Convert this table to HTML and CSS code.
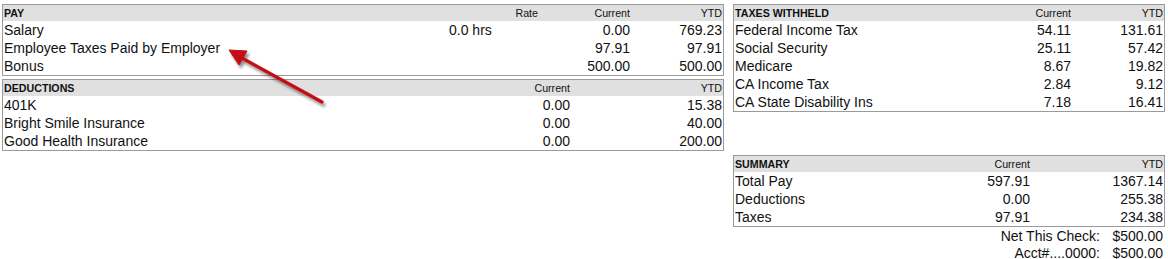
FILE: index.html
```html
<!DOCTYPE html>
<html>
<head>
<meta charset="utf-8">
<link rel="stylesheet" href="styles.css">
</head>
<body>
<div class="page">
  <div class="col left">
    <div class="box pay">
      <div class="row head">
        <span class="title">PAY</span><span></span><span class="r">Rate</span><span class="r">Current</span><span class="r">YTD</span>
      </div>
      <div class="row"><span>Salary</span><span>0.0 hrs</span><span></span><span class="r">0.00</span><span class="r">769.23</span></div>
      <div class="row"><span>Employee Taxes Paid by Employer</span><span></span><span></span><span class="r">97.91</span><span class="r">97.91</span></div>
      <div class="row"><span>Bonus</span><span></span><span></span><span class="r">500.00</span><span class="r">500.00</span></div>
    </div>
    <div class="box ded">
      <div class="row head"><span class="title">DEDUCTIONS</span><span class="r">Current</span><span class="r">YTD</span></div>
      <div class="row"><span>401K</span><span class="r">0.00</span><span class="r">15.38</span></div>
      <div class="row"><span>Bright Smile Insurance</span><span class="r">0.00</span><span class="r">40.00</span></div>
      <div class="row"><span>Good Health Insurance</span><span class="r">0.00</span><span class="r">200.00</span></div>
    </div>
  </div>
  <div class="col right">
    <div class="box tax">
      <div class="row head"><span class="title">TAXES WITHHELD</span><span class="r">Current</span><span class="r">YTD</span></div>
      <div class="row"><span>Federal Income Tax</span><span class="r">54.11</span><span class="r">131.61</span></div>
      <div class="row"><span>Social Security</span><span class="r">25.11</span><span class="r">57.42</span></div>
      <div class="row"><span>Medicare</span><span class="r">8.67</span><span class="r">19.82</span></div>
      <div class="row"><span>CA Income Tax</span><span class="r">2.84</span><span class="r">9.12</span></div>
      <div class="row"><span>CA State Disability Ins</span><span class="r">7.18</span><span class="r">16.41</span></div>
    </div>
    <div class="box sum">
      <div class="row head"><span class="title">SUMMARY</span><span class="r">Current</span><span class="r">YTD</span></div>
      <div class="row"><span>Total Pay</span><span class="r">597.91</span><span class="r">1367.14</span></div>
      <div class="row"><span>Deductions</span><span class="r">0.00</span><span class="r">255.38</span></div>
      <div class="row"><span>Taxes</span><span class="r">97.91</span><span class="r">234.38</span></div>
    </div>
    <div class="net">
      <div class="netrow"><span class="r">Net This Check:</span><span class="r">$500.00</span></div>
      <div class="netrow"><span class="r">Acct#....0000:</span><span class="r">$500.00</span></div>
    </div>
  </div>
</div>
<svg class="arrow" width="1168" height="259" viewBox="0 0 1168 259">
  <defs>
    <filter id="sh" x="-20%" y="-20%" width="150%" height="150%">
      <feGaussianBlur in="SourceAlpha" stdDeviation="1.6"/>
      <feOffset dx="2" dy="3" result="b"/>
      <feComponentTransfer><feFuncA type="linear" slope="0.45"/></feComponentTransfer>
      <feMerge><feMergeNode/><feMergeNode in="SourceGraphic"/></feMerge>
    </filter>
  </defs>
  <g filter="url(#sh)" fill="#c40f13" stroke="#c40f13">
    <line x1="322" y1="102" x2="240" y2="57" stroke-width="3.2" stroke-linecap="round"/>
    <polygon points="229,50 247,51 239,65" stroke-width="1" stroke-linejoin="round"/>
  </g>
</svg>
</body>
</html>
```
FILE: styles.css
```css
html, body {
  margin: 0;
  padding: 0;
  background: #fff;
}
body {
  font-family: "Liberation Sans", Arial, sans-serif;
  color: #111;
  position: relative;
  width: 1168px;
  height: 259px;
  overflow: hidden;
}
.page {
  display: flex;
  gap: 9px;
  padding: 4px 0 0 2px;
}
.col {
  display: flex;
  flex-direction: column;
}
.left {
  width: 722px;
  gap: 3px;
}
.right {
  width: 432px;
}
.box {
  border: 1px solid #9a9a9a;
}
.row {
  display: grid;
  height: 18px;
  line-height: 18px;
  font-size: 14px;
  padding: 0 1px;
  white-space: nowrap;
}
.row.head {
  height: 16px;
  line-height: 16px;
  font-size: 10.67px;
  background: #e0e0e0;
}
.title {
  font-weight: bold;
}
.r {
  text-align: right;
}
.pay .row {
  grid-template-columns: 445px 50px 39px 92px 92px;
}
.ded .row {
  grid-template-columns: 1fr 100px 152px;
}
.tax .row {
  grid-template-columns: 1fr 100px 92px;
}
.sum {
  margin-top: 43px;
}
.sum .row {
  grid-template-columns: 1fr 100px 133px;
}
.net {
  padding: 0 2px 0 0;
}
.netrow {
  display: grid;
  grid-template-columns: 1fr 63px;
  height: 17px;
  line-height: 18px;
  font-size: 14px;
}
.arrow {
  position: absolute;
  left: 0;
  top: 0;
  pointer-events: none;
}
```
